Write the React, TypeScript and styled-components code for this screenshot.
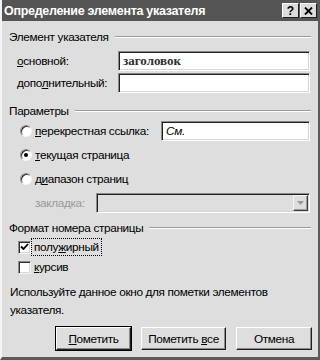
import React from "react";
import styled, { createGlobalStyle } from "styled-components";

const GlobalStyle = createGlobalStyle`
  html, body { margin: 0; padding: 0; background: #dedede; }
  * { box-sizing: border-box; }
`;

const Window = styled.div`
  width: 320px;
  height: 360px;
  background: #dedede;
  border-left: 2px solid #f4f4f4;
  border-right: 2px solid #5a5a5a;
  border-bottom: 3px solid #5a5a5a;
  font-family: "Liberation Sans", Arial, sans-serif;
  font-size: 11.8px;
  letter-spacing: -0.35px;
  color: #000;
  display: flex;
  flex-direction: column;
  overflow: hidden;
`;

const TitleBar = styled.div`
  height: 21px;
  margin-left: -2px;
  margin-right: -2px;
  background: #555555;
  color: #fff;
  display: flex;
  align-items: center;
  justify-content: space-between;
  padding: 0 3px 0 4px;
`;

const TitleText = styled.span`
  font-weight: bold;
  font-size: 12.5px;
  letter-spacing: -0.3px;
`;

const TitleButtons = styled.div`
  display: flex;
  gap: 1px;
`;

const TitleButton = styled.div`
  width: 17px;
  height: 15px;
  background: #dcdcdc;
  border-top: 1px solid #fff;
  border-left: 1px solid #fff;
  border-right: 1px solid #202020;
  border-bottom: 1px solid #202020;
  display: flex;
  align-items: center;
  justify-content: center;
  color: #000;
  font-weight: bold;
  font-size: 12px;
  letter-spacing: 0;
  line-height: 1;
`;

const Content = styled.div`
  padding: 7px 7px 0 7px;
  display: flex;
  flex-direction: column;
  flex: 1;
`;

const GroupHeader = styled.div<{ $mt?: number }>`
  display: flex;
  align-items: center;
  gap: 6px;
  height: 14px;
  margin-top: ${(p) => p.$mt ?? 0}px;
  &::after {
    content: "";
    flex: 1;
    height: 0;
    border-top: 1px solid #9a9a9a;
    border-bottom: 1px solid #fff;
  }
`;

const FieldGrid = styled.div`
  display: grid;
  grid-template-columns: 102px 1fr;
  row-gap: 2px;
  align-items: center;
  padding: 0 1px 0 7px;
  margin-top: 7px;
`;

const Sunken = styled.div<{ $disabled?: boolean }>`
  height: 20px;
  background: ${(p) => (p.$disabled ? "#dedede" : "#fff")};
  border-top: 1px solid #8a8a8a;
  border-left: 1px solid #8a8a8a;
  border-right: 1px solid #fff;
  border-bottom: 1px solid #fff;
  box-shadow: inset 1px 1px 0 #202020, inset -1px -1px 0 #d6d6d6;
  display: flex;
  align-items: center;
  padding-left: 4px;
`;

const CrossRefInput = styled(Sunken)`
  width: 149px;
  margin-left: auto;
  margin-right: 1px;
`;

const ComboBox = styled(Sunken)`
  margin-right: 1px;
  padding-left: 0;
`;

const SerifValue = styled.span`
  font-family: "Liberation Serif", "Times New Roman", serif;
  font-size: 13px;
  font-weight: bold;
  letter-spacing: 0;
  color: #303030;
`;

const ItalicValue = styled.span`
  font-style: italic;
`;

const Radios = styled.div`
  display: flex;
  flex-direction: column;
  padding-left: 11px;
  margin-top: 1px;
`;

const OptionRow = styled.div`
  display: flex;
  align-items: center;
  height: 24px;
  gap: 2px;
`;

const RadioCircle = styled.span<{ $checked?: boolean }>`
  width: 12px;
  height: 12px;
  border-radius: 50%;
  background: #fff;
  border: 1px solid;
  border-color: #8a8a8a #f4f4f4 #f4f4f4 #8a8a8a;
  box-shadow: inset 1px 1px 0 #303030;
  display: flex;
  align-items: center;
  justify-content: center;
  flex: none;
  &::after {
    content: "";
    width: 4px;
    height: 4px;
    border-radius: 50%;
    background: #000;
    display: ${(p) => (p.$checked ? "block" : "none")};
  }
`;

const CheckBox = styled.span`
  width: 13px;
  height: 13px;
  background: #fff;
  border: 1px solid;
  border-color: #8a8a8a #f4f4f4 #f4f4f4 #8a8a8a;
  box-shadow: inset 1px 1px 0 #303030, inset -1px -1px 0 #d6d6d6;
  display: flex;
  align-items: center;
  justify-content: center;
  flex: none;
`;

const Label = styled.span<{ $disabled?: boolean; $focus?: boolean }>`
  color: ${(p) => (p.$disabled ? "#9a9a9a" : "#000")};
  white-space: nowrap;
  outline: ${(p) => (p.$focus ? "1px dotted #000" : "none")};
  outline-offset: 1px;
  padding: 0 1px;
`;

const U = styled.span`
  text-decoration: underline;
`;

const BookmarkRow = styled.div`
  display: grid;
  grid-template-columns: 62px 1fr;
  align-items: center;
  height: 24px;
  padding-left: 25px;
`;

const ComboArrow = styled.div`
  margin-left: auto;
  width: 15px;
  height: 16px;
  margin-right: 1px;
  background: #dedede;
  border-top: 1px solid #f4f4f4;
  border-left: 1px solid #f4f4f4;
  border-right: 1px solid #404040;
  border-bottom: 1px solid #404040;
  box-shadow: inset -1px -1px 0 #9a9a9a;
  display: flex;
  align-items: center;
  justify-content: center;
`;

const Checks = styled.div`
  display: flex;
  flex-direction: column;
  padding-left: 9px;
  margin-top: 2px;
`;

const CheckRow = styled.div`
  display: flex;
  align-items: center;
  height: 20px;
  gap: 2px;
`;

const Hint = styled.p`
  margin: 6px 0 0 1px;
  line-height: 18px;
`;

const ButtonRow = styled.div`
  display: flex;
  justify-content: flex-end;
  gap: 10px;
  margin-top: auto;
  margin-right: -1px;
  padding-bottom: 7px;
`;

const Button = styled.div<{ $default?: boolean; $w: number }>`
  width: ${(p) => p.$w}px;
  height: 23px;
  background: #dedede;
  display: flex;
  align-items: center;
  justify-content: center;
  border: 1px solid;
  border-color: #fff #202020 #202020 #fff;
  box-shadow: inset -1px -1px 0 #8a8a8a;
  outline: ${(p) => (p.$default ? "1px solid #000" : "none")};
`;

export default function App() {
  return (
    <>
      <GlobalStyle />
      <Window>
        <TitleBar>
          <TitleText>Определение элемента указателя</TitleText>
          <TitleButtons>
            <TitleButton>?</TitleButton>
            <TitleButton>
              <svg width="9" height="8" viewBox="0 0 9 8">
                <path d="M1 0.5 L8 7.5 M8 0.5 L1 7.5" stroke="#000" strokeWidth="1.8" />
              </svg>
            </TitleButton>
          </TitleButtons>
        </TitleBar>
        <Content>
          <GroupHeader $mt={2}>Элемент указателя</GroupHeader>
          <FieldGrid>
            <Label>
              <U>о</U>сновной:
            </Label>
            <Sunken>
              <SerifValue>заголовок</SerifValue>
            </Sunken>
            <Label>
              допо<U>л</U>нительный:
            </Label>
            <Sunken />
          </FieldGrid>

          <GroupHeader $mt={11}>Параметры</GroupHeader>
          <Radios>
            <OptionRow>
              <RadioCircle />
              <Label>
                <U>п</U>ерекрестная ссылка:
              </Label>
              <CrossRefInput>
                <ItalicValue>См.</ItalicValue>
              </CrossRefInput>
            </OptionRow>
            <OptionRow>
              <RadioCircle $checked />
              <Label>
                <U>т</U>екущая страница
              </Label>
            </OptionRow>
            <OptionRow>
              <RadioCircle />
              <Label>
                д<U>и</U>апазон страниц
              </Label>
            </OptionRow>
          </Radios>
          <BookmarkRow>
            <Label $disabled>закладка:</Label>
            <ComboBox $disabled>
              <ComboArrow>
                <svg width="7" height="4" viewBox="0 0 7 4">
                  <path d="M0 0 H7 L3.5 4 Z" fill="#9a9a9a" />
                </svg>
              </ComboArrow>
            </ComboBox>
          </BookmarkRow>

          <GroupHeader $mt={6}>Формат номера страницы</GroupHeader>
          <Checks>
            <CheckRow>
              <CheckBox>
                <svg width="9" height="8" viewBox="0 0 9 8">
                  <path d="M1 3.5 L3.5 6 L8 1" stroke="#000" strokeWidth="1.8" fill="none" />
                </svg>
              </CheckBox>
              <Label $focus>
                полу<U>ж</U>ирный
              </Label>
            </CheckRow>
            <CheckRow>
              <CheckBox />
              <Label>
                <U>к</U>урсив
              </Label>
            </CheckRow>
          </Checks>

          <Hint>
            Используйте данное окно для пометки элементов
            <br />
            указателя.
          </Hint>

          <ButtonRow>
            <Button $default $w={75}>
              <U>П</U>ометить
            </Button>
            <Button $w={85}>
              Пометить&nbsp;<U>в</U>се
            </Button>
            <Button $w={76}>Отмена</Button>
          </ButtonRow>
        </Content>
      </Window>
    </>
  );
}
